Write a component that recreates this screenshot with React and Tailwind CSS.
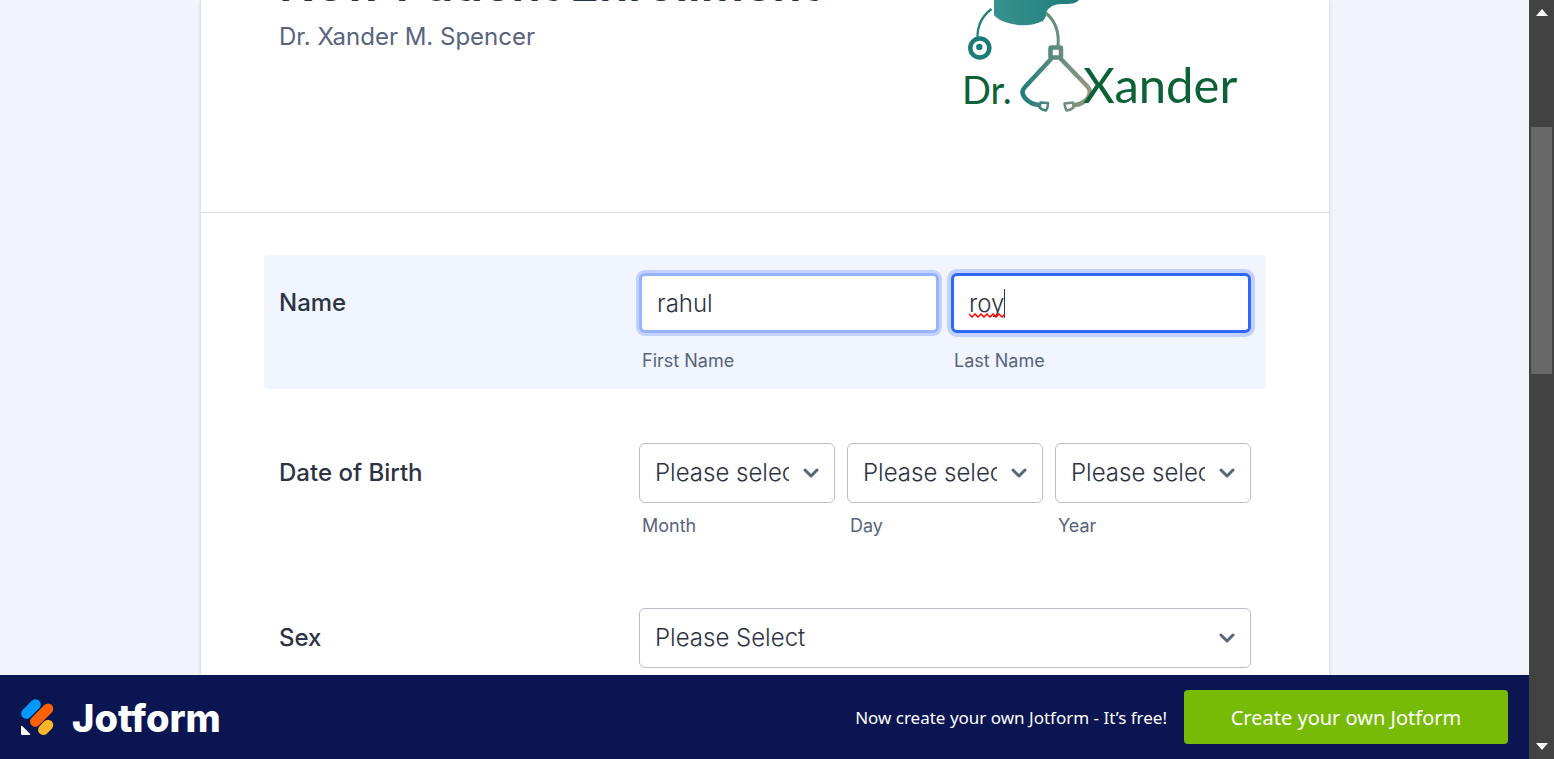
import React from "react";

const fieldBase =
  "block h-[60px] w-full min-w-0 rounded-md bg-white text-2xl font-light text-[#2c3345] outline-none";

function Sub({ htmlFor, children }) {
  return (
    <label htmlFor={htmlFor} className="ml-[3px] block text-lg leading-6 text-[#57647e]">
      {children}
    </label>
  );
}

function Chevron() {
  return (
    <svg viewBox="0 0 16 10" className="pointer-events-none absolute top-[25px] right-4 h-[10px] w-4" fill="none" stroke="#57647e" strokeWidth="3" strokeLinecap="round" strokeLinejoin="round" aria-hidden="true">
      <path d="M2 2l6 6 6-6" />
    </svg>
  );
}

function Select({ id, text, label }) {
  return (
    <div className="relative">
      <select id={id} aria-label={label} className={`${fieldBase} appearance-none border border-[#b8bdc9] pr-[45px] pl-[15px]`}>
        <option>{text}</option>
      </select>
      <Chevron />
    </div>
  );
}

function Row({ label, children, className = "" }) {
  return (
    <div role="group" aria-label={label} className={`flex rounded px-[15px] ${className}`}>
      <div className="w-[360px] shrink-0 pt-[14px] text-2xl leading-8 font-medium text-[#2c3345]">{label}</div>
      <div className="min-w-0 flex-1">{children}</div>
    </div>
  );
}

function DoctorLogo() {
  return (
    <svg viewBox="940 0 320 125" className="h-[125px] w-80 shrink-0" role="img" aria-label="Dr. Xander">
      <defs>
        <linearGradient id="cap" x1="0" x2="1">
          <stop offset="0" stopColor="#38928f" />
          <stop offset="1" stopColor="#1e7c7a" />
        </linearGradient>
        <linearGradient id="tube" gradientUnits="userSpaceOnUse" x1="1020" y1="0" x2="1092" y2="0">
          <stop offset="0" stopColor="#1f7c7b" />
          <stop offset="0.5" stopColor="#5d8b7e" />
          <stop offset="1" stopColor="#9a9881" />
        </linearGradient>
      </defs>
      <path d="M994 0V15Q997 20 1010 23.500Q1028 28 1043 21Q1046 18 1046.500 12Q1050 4 1062 4C1070 4 1076 4 1079 0Z" fill="url(#cap)" />
      <path d="M991.500 9Q977 20 977.500 38" fill="none" stroke="#257f7d" strokeWidth="2.300" />
      <circle cx="979.800" cy="48" r="9.500" fill="none" stroke="#1c7b78" strokeWidth="4.500" />
      <circle cx="979.300" cy="47" r="3.200" fill="#1c7b78" />
      <path d="M1046 13Q1060 25 1058 46" fill="none" stroke="#65907f" strokeWidth="3" />
      <g fill="none" stroke="url(#tube)" strokeLinejoin="round" strokeLinecap="round">
        <rect x="1050.500" y="47.500" width="10.500" height="10" rx="1" strokeWidth="4.500" />
        <path d="M1051 59L1025 87Q1020 92 1025 98Q1030 104 1039 105" strokeWidth="4.500" />
        <path d="M1061 59L1087 86Q1092 91 1088 98Q1083 104 1075 105" strokeWidth="4.500" />
        <path d="M1040.500 102.500L1048 103Q1048 108 1046 110.500Q1042 110 1039.500 107.500Z" strokeWidth="2.500" />
        <path d="M1073 102.500L1064.500 103.500Q1065 108 1066.500 110.500Q1071 110 1073.500 107.500Z" strokeWidth="2.500" />
      </g>
      <g fill="#0c6137" fontFamily="Lato, sans-serif" fontWeight="400">
        <text x="962" y="104" fontSize="38">Dr.</text>
        <text x="1083" y="103" fontSize="49">Xander</text>
      </g>
    </svg>
  );
}

function Footer() {
  return (
    <footer className="flex h-[84px] shrink-0 items-center bg-[#0a1551] px-[21px]">
      <a href="#home" aria-label="Jotform" className="flex items-center gap-[18px] text-white">
        <svg viewBox="0 0 33 37" className="h-[37px] w-[33px]" aria-hidden="true">
          <g strokeWidth="10.500" strokeLinecap="round">
            <path d="M5.500 14.500L14.500 5.500" stroke="#0099ff" />
            <path d="M14.300 22.500L27 9.700" stroke="#ff6100" />
            <path d="M22.300 30.800L27 26" stroke="#ffb629" />
          </g>
          <path d="M0 27.500V34.500q0 1.500 1.500 1.500h7q1.500 0 .5-1.200L1.500 27.200Q0 26 0 27.500Z" fill="#fff" />
        </svg>
        <span className="pt-0.5 font-[Inter,sans-serif] text-[38px] leading-10 font-extrabold">Jotform</span>
      </a>
      <div className="ml-auto flex items-center gap-[17px] font-['Noto_Sans','Open_Sans',sans-serif] text-white">
        <span className="pt-0.5 text-[17px]">Now create your own Jotform - It’s free!</span>
        <button className="h-[54px] w-[324px] rounded bg-[#78bb07] pt-0.5 text-xl">Create your own Jotform</button>
      </div>
    </footer>
  );
}

function ScrollBar() {
  return (
    <div className="flex w-[25px] shrink-0 flex-col items-center justify-between bg-[#424242] py-[9px]" aria-hidden="true">
      <svg viewBox="0 0 12 7" className="h-[7px] w-3"><path d="M6 0l6 7H0z" fill="#fff" /></svg>
      <div className="flex w-[21px] flex-1 flex-col">
        <div className="grow-[111]" />
        <div className="h-[34%] bg-[#686868]" />
        <div className="grow-[370]" />
      </div>
      <svg viewBox="0 0 12 7" className="h-[7px] w-3"><path d="M0 0h12L6 7z" fill="#fff" /></svg>
    </div>
  );
}

export default function App() {
  return (
    <div className="flex h-screen overflow-hidden bg-[#f3f3fe] font-[Inter,sans-serif]">
      <div className="flex min-w-0 flex-1 flex-col">
        <main className="min-h-0 flex-1 overflow-hidden pr-[199px] pl-[200px]">
          <form className="min-h-full border-x border-[#e3e3ef] bg-white shadow-sm">
            <header className="flex h-[213px] items-start justify-between border-b border-[#d7d8e1] pr-[69px] pl-[78px]">
              <div className="-mt-[46px]">
                <h1 className="text-5xl leading-[60px] font-semibold text-[#2c3345]">New Patient Enrollment</h1>
                <p className="mt-[7px] text-2xl leading-8 text-[#57647e]">Dr. Xander M. Spencer</p>
              </div>
              <DoctorLogo />
            </header>
            <div className="flex flex-col px-[63px] pt-[42px]">
              <Row label="Name" className="h-[134px] bg-[#f1f5ff] pt-[18px]">
                <div className="grid grid-cols-2 gap-3">
                  <div>
                    <input id="first" defaultValue="rahul" className={`${fieldBase} border-[3px] border-[#97b2ff] px-[15px] ring-[3px] ring-[#c2d1ff]`} />
                    <div className="pt-4"><Sub htmlFor="first">First Name</Sub></div>
                  </div>
                  <div>
                    <div className="relative">
                      <input id="last" defaultValue="roy" className={`${fieldBase} border-[3px] border-[#2e69ff] px-[15px] ring-4 ring-[#c2d1ff]`} />
                      <span className="absolute top-4 left-[53px] h-[29px] w-px bg-[#2c3345]" />
                      <svg viewBox="0 0 36 5" className="absolute top-10 left-[18px] h-[5px] w-9" fill="none" stroke="#f00" strokeWidth="1.500" aria-hidden="true">
                        <path d="M0 1l3 3 3-3 3 3 3-3 3 3 3-3 3 3 3-3 3 3 3-3 3 3 3-3" />
                      </svg>
                    </div>
                    <div className="pt-4"><Sub htmlFor="last">Last Name</Sub></div>
                  </div>
                </div>
              </Row>
              <Row label="Date of Birth" className="mt-[54px]">
                <div className="grid grid-cols-3 gap-3">
                  {["Month", "Day", "Year"].map((t) => (
                    <div key={t}>
                      <Select id={t} text="Please select a" />
                      <div className="pt-[11px]"><Sub htmlFor={t}>{t}</Sub></div>
                    </div>
                  ))}
                </div>
              </Row>
              <Row label="Sex" className="mt-[70px]">
                <Select id="sex" text="Please Select" label="Sex" />
              </Row>
            </div>
          </form>
        </main>
        <Footer />
      </div>
      <ScrollBar />
    </div>
  );
}
